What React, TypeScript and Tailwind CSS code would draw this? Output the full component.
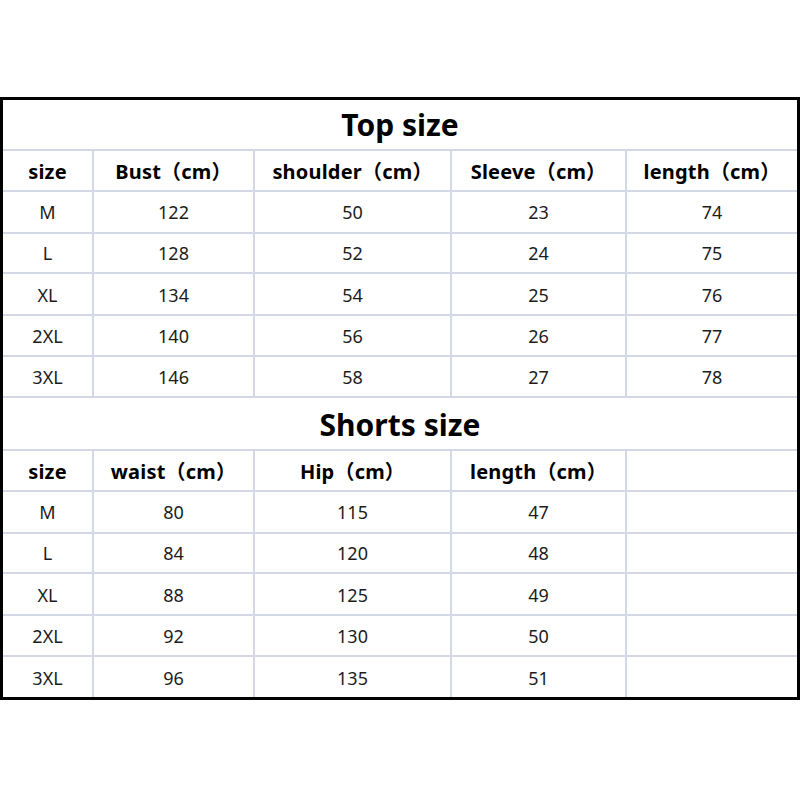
import React from "react";

const cols = "grid grid-cols-[89px_161px_197px_175px_1fr]";
const font = { fontFamily: '"Noto Sans", "Noto Sans CJK SC", sans-serif' };

function Row({ cells, bold, h, last }: { cells: string[]; bold?: boolean; h: string; last?: boolean }) {
  return (
    <div className={`${cols} ${h} ${last ? "" : "border-b-2 border-[#d3d7e6]"}`}>
      {cells.map((c, i) => (
        <div
          key={i}
          className={`flex items-center justify-center ${i > 0 ? "border-l-2 border-[#d3d7e6]" : ""} ${
            bold ? "text-[20px] font-bold text-black pt-[3px] tracking-[0.2px]" : "text-[18px] text-[#1c1c1c] pt-[2px]"
          }`}
        >
          {c}
        </div>
      ))}
    </div>
  );
}

const top = [
  ["M", "122", "50", "23", "74"],
  ["L", "128", "52", "24", "75"],
  ["XL", "134", "54", "25", "76"],
  ["2XL", "140", "56", "26", "77"],
  ["3XL", "146", "58", "27", "78"],
];
const shorts = [
  ["M", "80", "115", "47", ""],
  ["L", "84", "120", "48", ""],
  ["XL", "88", "125", "49", ""],
  ["2XL", "92", "130", "50", ""],
  ["3XL", "96", "135", "51", ""],
];
const hs = ["h-[42px]", "h-[41px]", "h-[42px]", "h-[41px]", "h-[41px]"];

export default function App() {
  return (
    <div className="w-[800px] h-[800px] bg-white" style={font}>
      <div className="h-[97px]" />
      <div className="w-[800px] h-[603px] border-[3px] border-black bg-white flex flex-col">
        <div className="h-[51px] border-b-2 border-[#d3d7e6] flex items-center justify-center text-[30px] font-bold text-black leading-none pt-[2px]">
          Top size
        </div>
        <Row bold h="h-[41px]" cells={["size", "Bust（cm）", "shoulder（cm）", "Sleeve（cm）", "length（cm）"]} />
        {top.map((r, i) => (
          <Row key={i} h={hs[i]} cells={r} />
        ))}
        <div className="h-[53px] border-b-2 border-[#d3d7e6] flex items-center justify-center text-[30px] font-bold text-black leading-none pt-[3px]">
          Shorts size
        </div>
        <Row bold h="h-[41px]" cells={["size", "waist（cm）", "Hip（cm）", "length（cm）", ""]} />
        {shorts.map((r, i) => (
          <Row key={i} h={i === 4 ? "h-[40px]" : hs[i]} cells={r} last={i === 4} />
        ))}
      </div>
    </div>
  );
}
